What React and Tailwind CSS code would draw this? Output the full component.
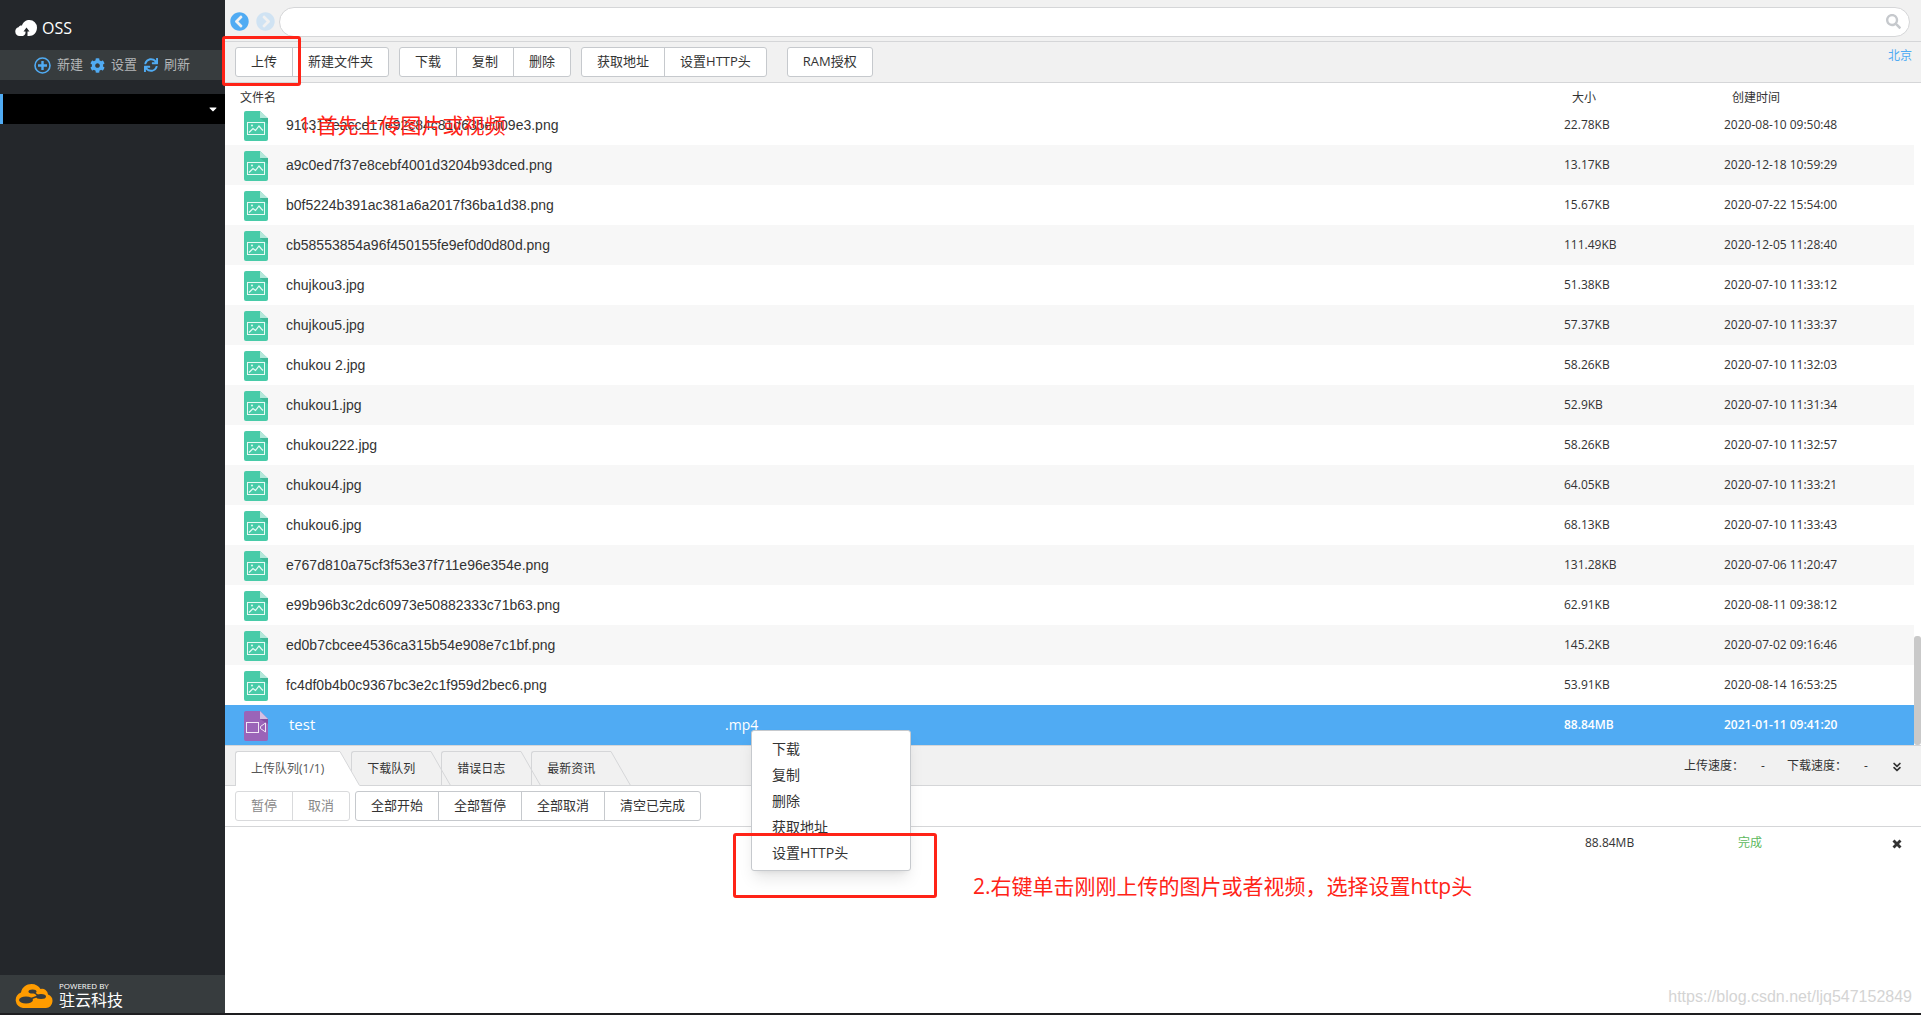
import { FaChevronCircleLeft, FaChevronCircleRight, FaCog, FaSearch, FaSync, FaCaretDown } from "react-icons/fa";
import { ChevronsDown, X } from "lucide-react";

const files = [
  ["91c317eacce17e92c84c81d635e009e3.png", "22.78KB", "2020-08-10 09:50:48"],
  ["a9c0ed7f37e8cebf4001d3204b93dced.png", "13.17KB", "2020-12-18 10:59:29"],
  ["b0f5224b391ac381a6a2017f36ba1d38.png", "15.67KB", "2020-07-22 15:54:00"],
  ["cb58553854a96f450155fe9ef0d0d80d.png", "111.49KB", "2020-12-05 11:28:40"],
  ["chujkou3.jpg", "51.38KB", "2020-07-10 11:33:12"],
  ["chujkou5.jpg", "57.37KB", "2020-07-10 11:33:37"],
  ["chukou 2.jpg", "58.26KB", "2020-07-10 11:32:03"],
  ["chukou1.jpg", "52.9KB", "2020-07-10 11:31:34"],
  ["chukou222.jpg", "58.26KB", "2020-07-10 11:32:57"],
  ["chukou4.jpg", "64.05KB", "2020-07-10 11:33:21"],
  ["chukou6.jpg", "68.13KB", "2020-07-10 11:33:43"],
  ["e767d810a75cf3f53e37f711e96e354e.png", "131.28KB", "2020-07-06 11:20:47"],
  ["e99b96b3c2dc60973e50882333c71b63.png", "62.91KB", "2020-08-11 09:38:12"],
  ["ed0b7cbcee4536ca315b54e908e7c1bf.png", "145.2KB", "2020-07-02 09:16:46"],
  ["fc4df0b4b0c9367bc3e2c1f959d2bec6.png", "53.91KB", "2020-08-14 16:53:25"],
];

const menuItems = ["下载", "复制", "删除", "获取地址", "设置HTTP头"];

function ImageFileIcon() {
  return (
    <svg width="24" height="30" viewBox="0 0 24 30" className="mt-0.5 block">
      <path d="M0 2a2 2 0 0 1 2-2h14l8 8v20a2 2 0 0 1-2 2H2a2 2 0 0 1-2-2z" fill="#48cba8" />
      <path d="M16 7h8v6z" fill="#3fb898" />
      <path d="M16 0l8 7h-8z" fill="#b3e8da" />
      <rect x="3.5" y="11.5" width="17" height="12" fill="none" stroke="#e9faf5" />
      <path d="M5 21.5l4-4 2.5 2 3.500-4.500 2.500 3 1.500 1.500" fill="none" stroke="#e9faf5" strokeWidth="1.2" />
      <circle cx="8" cy="14.5" r="1" fill="#e9faf5" />
    </svg>
  );
}

function VideoFileIcon() {
  return (
    <svg width="24" height="30" viewBox="0 0 24 30" className="mt-0.5 block">
      <path d="M0 2a2 2 0 0 1 2-2h14l8 8v20a2 2 0 0 1-2 2H2a2 2 0 0 1-2-2z" fill="#9b64b8" />
      <path d="M16 8h8v5z" fill="#8650a3" />
      <path d="M16 0l8 8h-8z" fill="#d6bfe2" />
      <rect x="2.5" y="11.5" width="12" height="10" fill="none" stroke="#f1e7f6" />
      <path d="M21.5 12v9l-5-3.500v-2z" fill="none" stroke="#f1e7f6" />
    </svg>
  );
}

function OssLogo() {
  return (
    <svg width="22" height="16" viewBox="0 0 22 16">
      <path d="M14.500 0a7.500 7.500 0 0 1 7.500 7.500c0 5-3.500 8.500-8 8.500h-1.500v-4.500h2L11.500 7.500 8.500 11.500h2c.300 2-.500 3.500-2.500 4.500H4.500A4.500 4.500 0 0 1 3.500 7.200c.800-1.500 2-2 3.500-1.700C8 2 11 0 14.500 0z" fill="#fff" />
    </svg>
  );
}

function VendorLogo() {
  return (
    <svg width="38" height="24" viewBox="0 0 38 24">
      <path d="M8 24a8 8 0 0 1-2-15.500C7 3 11.500 0 16.500 0c4 0 7.500 2 9 5a6 6 0 0 1 7.500 5.500A7 7 0 0 1 31 24z" fill="#ff9c00" />
      <g fill="#373c3e">
        <ellipse cx="11" cy="16" rx="7" ry="3.5" />
        <ellipse cx="17.5" cy="7.500" rx="4" ry="2" />
        <ellipse cx="26" cy="12.5" rx="5" ry="2.5" />
      </g>
      <path d="M15 15l7-2.500M19 8.500l4 3" stroke="#373c3e" strokeWidth="1.5" />
    </svg>
  );
}

function PlusCircleIcon() {
  return (
    <svg width="17" height="17" viewBox="0 0 17 17" fill="none" stroke="#50abf3">
      <circle cx="8.5" cy="8.5" r="7.5" strokeWidth="1.6" />
      <path d="M8.5 4v9M4 8.500h9" strokeWidth="2.4" />
    </svg>
  );
}

function ButtonGroup({ items, disabled }) {
  return (
    <div
      className={
        disabled
          ? "flex divide-x divide-[#d9dadc] rounded-[3px] border border-[#d9dadc] bg-white text-[#888]"
          : "flex divide-x divide-[#c6c9cd] rounded-[3px] border border-[#c6c9cd] bg-white text-[#333]"
      }
    >
      {items.map((item) => (
        <button key={item} type="button" disabled={disabled} className="h-7 px-[15px] text-[13px]">
          {item}
        </button>
      ))}
    </div>
  );
}

function Tab({ label, active }) {
  return (
    <button
      type="button"
      role="tab"
      aria-selected={!!active}
      className={active ? "z-10 -mr-[9px] flex h-[35px] text-[#555]" : "-mr-2.5 flex h-[35px] text-[#333]"}
    >
      <span
        className={
          active
            ? "flex h-full items-center rounded-tl-[3px] border-t border-l border-[#d5d6d8] bg-white pr-4 pl-[15px]"
            : "flex h-[34px] items-center rounded-tl-[3px] border-t border-l border-[#d5d6d8] pr-4 pl-[15px]"
        }
      >
        {label}
      </span>
      <svg width="20" height="35" viewBox="0 0 20 35">
        {active && <path d="M0 0L20 35H0z" fill="#fff" />}
        <path d="M0 .5L19.5 34.5" stroke="#d5d6d8" fill="none" />
      </svg>
    </button>
  );
}

function Sidebar() {
  return (
    <aside className="flex w-[225px] shrink-0 flex-col bg-[#24272b]">
      <div className="flex h-[50px] items-center gap-[5px] pt-1.5 pl-[15px] text-base text-white">
        <OssLogo />
        OSS
      </div>
      <div className="flex h-[30px] items-center gap-[7px] bg-[#373c3e] pl-[34px] text-[13px] text-[#b4b6b7]">
        <button type="button" className="flex items-center gap-1.5">
          <PlusCircleIcon />
          新建
        </button>
        <button type="button" className="flex items-center gap-1.5">
          <FaCog size={15} className="text-[#50abf3]" />
          设置
        </button>
        <button type="button" className="flex items-center gap-1.5">
          <FaSync size={14} className="text-[#50abf3]" />
          刷新
        </button>
      </div>
      <button
        type="button"
        aria-label="Bucket"
        className="mt-3.5 flex h-[30px] items-center justify-end border-l-[3px] border-[#50abf3] bg-black pr-1.5 text-white"
      >
        <FaCaretDown size={12} />
      </button>
      <div className="mt-auto flex h-[38px] items-center gap-1.5 bg-[#373c3e] pt-1 pl-[15px] text-white">
        <VendorLogo />
        <div>
          <div className="text-[8px] leading-[8px]">POWERED BY</div>
          <div className="text-base leading-5">驻云科技</div>
        </div>
      </div>
    </aside>
  );
}

function FileTable() {
  return (
    <div className="flex">
      <table className="w-full table-fixed text-left text-xs text-[#333]">
        <thead>
          <tr className="h-[22px] align-bottom leading-[14px]">
            <th className="pl-[15px] font-normal">文件名</th>
            <th className="w-40 pl-2 font-normal">大小</th>
            <th className="w-[190px] pl-2 font-normal">创建时间</th>
          </tr>
        </thead>
        <tbody>
          {files.map(([name, size, date]) => (
            <tr key={name} className="h-10 even:bg-[#f7f7f7]">
              <td className="pl-[19px]">
                <div className="flex items-center gap-[18px] font-['Liberation_Sans',Arial,sans-serif] text-sm">
                  <ImageFileIcon />
                  {name}
                </div>
              </td>
              <td>{size}</td>
              <td>{date}</td>
            </tr>
          ))}
          <tr className="h-10 bg-[#50abf3] text-white">
            <td className="pl-[19px]">
              <div className="flex items-center text-sm">
                <VideoFileIcon />
                <span className="w-[457px] pl-[21px] text-[15px]">test</span>
                <span>.mp4</span>
              </div>
            </td>
            <td className="font-semibold">88.84MB</td>
            <td className="font-semibold">2021-01-11 09:41:20</td>
          </tr>
        </tbody>
      </table>
      <div className="flex w-[7px] shrink-0 flex-col justify-end">
        <div className="h-[109px] rounded-[3px] bg-[#c9c9c9]" />
      </div>
    </div>
  );
}

function TransferPanel() {
  return (
    <section className="flex flex-1 flex-col border-t border-[#d5d6d8] text-xs text-[#333]">
      <div className="flex h-10 items-end justify-between border-b border-[#d5d6d8] bg-[#f1f1f1] pl-2.5">
        <div role="tablist" className="-mb-px flex">
          <Tab label="上传队列(1/1)" active />
          <Tab label="下载队列" />
          <Tab label="错误日志" />
          <Tab label="最新资讯" />
        </div>
        <div className="flex h-full items-center pr-[17px]">
          <span className="w-[77px]">上传速度：</span>
          <span className="w-[26px]">-</span>
          <span className="w-[77px]">下载速度：</span>
          <span className="w-[26px]">-</span>
          <button type="button" aria-label="收起" className="pt-0.5">
            <ChevronsDown size={14} strokeWidth={3} />
          </button>
        </div>
      </div>
      <div className="flex h-[41px] items-center gap-[5px] border-b border-[#d5d6d8] pl-2.5">
        <ButtonGroup items={["暂停", "取消"]} disabled />
        <ButtonGroup items={["全部开始", "全部暂停", "全部取消", "清空已完成"]} />
      </div>
      <div className="flex h-8 items-center justify-end pr-[17px]">
        <span className="w-[153px]">88.84MB</span>
        <span className="w-[152px] text-[#5cb85c]">完成</span>
        <button type="button" aria-label="移除" className="pt-0.5">
          <X size={14} strokeWidth={5} strokeLinecap="butt" />
        </button>
      </div>
    </section>
  );
}

export default function App() {
  return (
    <div className="relative flex min-h-screen border-b-2 border-[#1e1e20] bg-white font-['Open_Sans','Noto_Sans_CJK_SC',sans-serif]">
      <Sidebar />
      <main className="flex min-w-0 flex-1 flex-col">
        <header className="flex h-[42px] items-center border-b border-[#d5d6d8] bg-[#f1f1f1] pt-0.5 pr-[11px] pl-[5px]">
          <button type="button" aria-label="后退">
            <FaChevronCircleLeft size={19} className="text-[#50abf3]" />
          </button>
          <button type="button" aria-label="前进" className="ml-[7px]">
            <FaChevronCircleRight size={19} className="text-[#d0e3f3]" />
          </button>
          <div className="ml-1 flex h-[30px] flex-1 items-center rounded-full border border-[#d5d6d8] bg-white pr-2 pl-4">
            <input aria-label="搜索" className="h-full flex-1 text-sm outline-none" />
            <FaSearch size={15} className="text-[#c6c9cd]" />
          </div>
        </header>
        <div className="flex h-[41px] items-center gap-2.5 border-b border-[#d5d6d8] bg-[#f1f1f1] pr-[9px] pl-2.5">
          <ButtonGroup items={["上传", "新建文件夹"]} />
          <ButtonGroup items={["下载", "复制", "删除"]} />
          <ButtonGroup items={["获取地址", "设置HTTP头"]} />
          <div className="ml-2.5">
            <ButtonGroup items={["RAM授权"]} />
          </div>
          <a href="#region" className="mt-1.5 ml-auto self-start text-xs text-[#50abf3]">
            北京
          </a>
        </div>
        <FileTable />
        <TransferPanel />
      </main>

      <ul className="absolute top-[730px] left-[751px] z-20 w-40 rounded-[3px] border border-[#c6c9cd] bg-white pt-[5px] pb-1 text-sm text-[#333] shadow-lg">
        {menuItems.map((item) => (
          <li key={item}>
            <button type="button" className="block h-[26px] w-full px-5 text-left">
              {item}
            </button>
          </li>
        ))}
      </ul>

      <div className="absolute top-9 left-[222px] z-30 h-[50px] w-[79px] rounded-[3px] border-3 border-[#ff2317]" />
      <p className="absolute top-[109px] left-[299px] z-30 text-[21px] leading-8 text-[#ff2317]">1.首先上传图片或视频</p>
      <div className="absolute top-[833px] left-[733px] z-30 h-[65px] w-[204px] rounded-[3px] border-3 border-[#ff2317]" />
      <p className="absolute top-[870px] left-[973px] z-30 text-[21px] leading-8 text-[#ff2317]">
        2.右键单击刚刚上传的图片或者视频，选择设置http头
      </p>
      <p className="absolute right-[9px] bottom-1 font-['Liberation_Sans',Arial,sans-serif] text-base text-[#d4d4d4]">
        https://blog.csdn.net/ljq547152849
      </p>
    </div>
  );
}
